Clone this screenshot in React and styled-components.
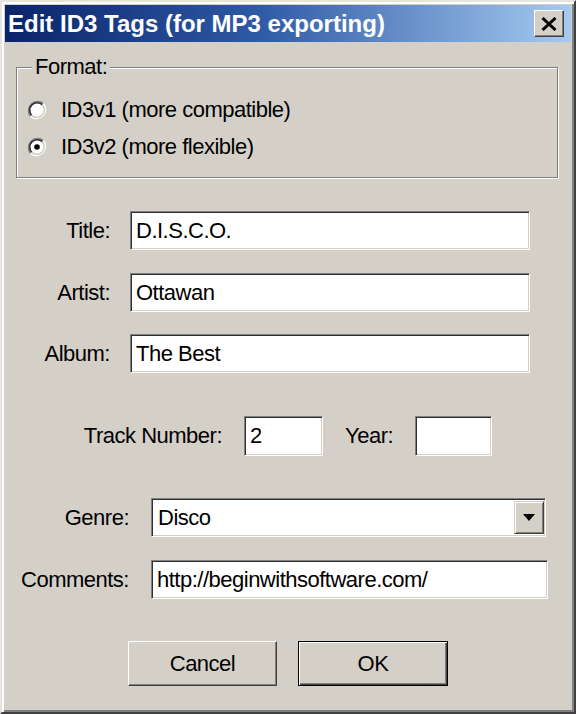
import React from 'react'
import styled, { createGlobalStyle } from 'styled-components'

const GlobalStyle = createGlobalStyle`
  html, body {
    margin: 0;
    padding: 0;
    background: #d4d0c8;
  }
  body {
    font-family: "Liberation Sans", Arial, sans-serif;
    font-size: 22px;
    letter-spacing: -0.5px;
    color: #000;
  }
  * { box-sizing: border-box; }
`

const RadioIcon = ({ checked }) => (
  <svg width="20" height="20" viewBox="0 0 20 20">
    <circle cx="10" cy="10" r="7.5" fill="#fff" />
    <path d="M3.6 16.4 A9.1 9.1 0 0 1 16.4 3.6" fill="none" stroke="#808080" strokeWidth="1.6" />
    <path d="M16.4 3.6 A9.1 9.1 0 0 1 3.6 16.4" fill="none" stroke="#fff" strokeWidth="1.6" />
    <path d="M4.7 15.3 A7.5 7.5 0 0 1 15.3 4.7" fill="none" stroke="#303030" strokeWidth="1.6" />
    <path d="M15.3 4.7 A7.5 7.5 0 0 1 4.7 15.3" fill="none" stroke="#d4d0c8" strokeWidth="1.6" />
    {checked && <circle cx="10" cy="10" r="2.8" fill="#000" />}
  </svg>
)

const EditTagsDialog = () => {
  return (
    <Window>
      <TitleBar>
        <TitleText>Edit ID3 Tags (for MP3 exporting)</TitleText>
        <CloseBTN aria-label="Close">
          <svg width="16" height="14" viewBox="0 0 16 14">
            <path d="M1.5 1 L14.5 13 M14.5 1 L1.5 13" stroke="#000" strokeWidth="3" />
          </svg>
        </CloseBTN>
      </TitleBar>

      <Body>
        <GroupBox>
          <Legend>Format:</Legend>
          <RadioRow>
            <RadioIcon />
            <span>ID3v1 (more compatible)</span>
          </RadioRow>
          <RadioRow>
            <RadioIcon checked />
            <span>ID3v2 (more flexible)</span>
          </RadioRow>
        </GroupBox>

        <FieldRow $top={33} $gap={20}>
          <Label $width={105}>Title:</Label>
          <TextBox $width={400} defaultValue="D.I.S.C.O." />
        </FieldRow>
        <FieldRow $top={23} $gap={20}>
          <Label $width={105}>Artist:</Label>
          <TextBox $width={400} defaultValue="Ottawan" />
        </FieldRow>
        <FieldRow $top={22} $gap={20}>
          <Label $width={105}>Album:</Label>
          <TextBox $width={400} defaultValue="The Best" />
        </FieldRow>

        <FieldRow $top={43} $gap={22}>
          <Label $width={217}>Track Number:</Label>
          <TextBox $width={79} $height={40} defaultValue="2" />
          <Label>Year:</Label>
          <TextBox $width={77} $height={40} defaultValue="" />
        </FieldRow>

        <FieldRow $top={42} $gap={22}>
          <Label $width={124}>Genre:</Label>
          <Combo>
            <ComboText>Disco</ComboText>
            <DropBTN>
              <svg width="12" height="7" viewBox="0 0 12 7">
                <path d="M0 0 H12 L6 7 Z" fill="#000" />
              </svg>
            </DropBTN>
          </Combo>
        </FieldRow>
        <FieldRow $top={23} $gap={22}>
          <Label $width={124}>Comments:</Label>
          <TextBox $width={397} defaultValue="http://beginwithsoftware.com/" />
        </FieldRow>

        <ButtonRow>
          <PushBTN $width={149}>Cancel</PushBTN>
          <PushBTN $width={150} $default>OK</PushBTN>
        </ButtonRow>
      </Body>
    </Window>
  )
}

const App = () => (
  <>
    <GlobalStyle />
    <EditTagsDialog />
  </>
)

const Window = styled.div`
  width: 576px;
  height: 714px;
  display: flex;
  flex-direction: column;
  padding: 3px;
  background: #d4d0c8;
  border: 2px solid;
  border-color: #e6e4de #404040 #404040 #e6e4de;
  box-shadow: inset 2px 2px #fff, inset -2px -2px #808080;
`

const TitleBar = styled.div`
  height: 37px;
  display: flex;
  align-items: center;
  justify-content: space-between;
  padding: 0 7px 0 3px;
  background: linear-gradient(to right, #0a246a 0%, #2f5aa6 45%, #a6caf0 100%);
`

const TitleText = styled.div`
  color: #fff;
  font-weight: bold;
  font-size: 24px;
  letter-spacing: 0;
  white-space: nowrap;
`

const CloseBTN = styled.button`
  width: 30px;
  height: 27px;
  padding: 0;
  display: flex;
  align-items: center;
  justify-content: center;
  background: #d4d0c8;
  border: 1px solid;
  border-color: #fff #404040 #404040 #fff;
  box-shadow: inset -1px -1px #808080;
`

const Body = styled.div`
  flex: 1;
  display: flex;
  flex-direction: column;
`

const GroupBox = styled.fieldset`
  margin: 13px 13px 0 11px;
  padding: 12px 0 12px 10px;
  border: 1px solid #808080;
  box-shadow: inset 1px 1px #fff, 1px 1px #fff;
  min-width: 0;
`

const Legend = styled.legend`
  margin-left: 5px;
  padding: 0 3px;
  line-height: 24px;
  background: #d4d0c8;
`

const RadioRow = styled.div`
  height: 37px;
  display: flex;
  align-items: center;
  gap: 14px;
`

const FieldRow = styled.div`
  display: flex;
  align-items: center;
  gap: ${p => p.$gap}px;
  margin-top: ${p => p.$top}px;
`

const Label = styled.div`
  width: ${p => (p.$width ? `${p.$width}px` : 'auto')};
  flex-shrink: 0;
  text-align: right;
  white-space: nowrap;
`

const sunken = `
  background: #fff;
  border: 1px solid;
  border-color: #808080 #fff #fff #808080;
  box-shadow: inset 1px 1px #303030, inset -1px -1px #d4d0c8;
`

const TextBox = styled.input.attrs({ type: 'text' })`
  ${sunken}
  width: ${p => p.$width}px;
  height: ${p => p.$height || 39}px;
  padding: 0 5px;
  font: inherit;
  letter-spacing: inherit;
  color: #000;
  outline: none;
  margin: 0;
`

const Combo = styled.div`
  ${sunken}
  width: 395px;
  height: 39px;
  display: flex;
  align-items: stretch;
  padding: 2px 1px 2px 2px;
`

const ComboText = styled.div`
  flex: 1;
  display: flex;
  align-items: center;
  padding-left: 4px;
`

const DropBTN = styled.div`
  width: 30px;
  display: flex;
  align-items: center;
  justify-content: center;
  background: #d4d0c8;
  border: 1px solid;
  border-color: #d4d0c8 #404040 #404040 #d4d0c8;
  box-shadow: inset 1px 1px #fff, inset -1px -1px #808080;
`

const ButtonRow = styled.div`
  display: flex;
  justify-content: center;
  gap: 21px;
  margin-top: 42px;
`

const PushBTN = styled.button`
  width: ${p => p.$width}px;
  height: 45px;
  padding: 0;
  font: inherit;
  letter-spacing: inherit;
  color: #000;
  background: #d4d0c8;
  border: 1px solid;
  border-color: ${p => (p.$default ? '#000' : '#fff #404040 #404040 #fff')};
  box-shadow: ${p =>
    p.$default
      ? 'inset 1px 1px #fff, inset -1px -1px #404040, inset -2px -2px #808080'
      : 'inset -1px -1px #808080'};
`

export default App
